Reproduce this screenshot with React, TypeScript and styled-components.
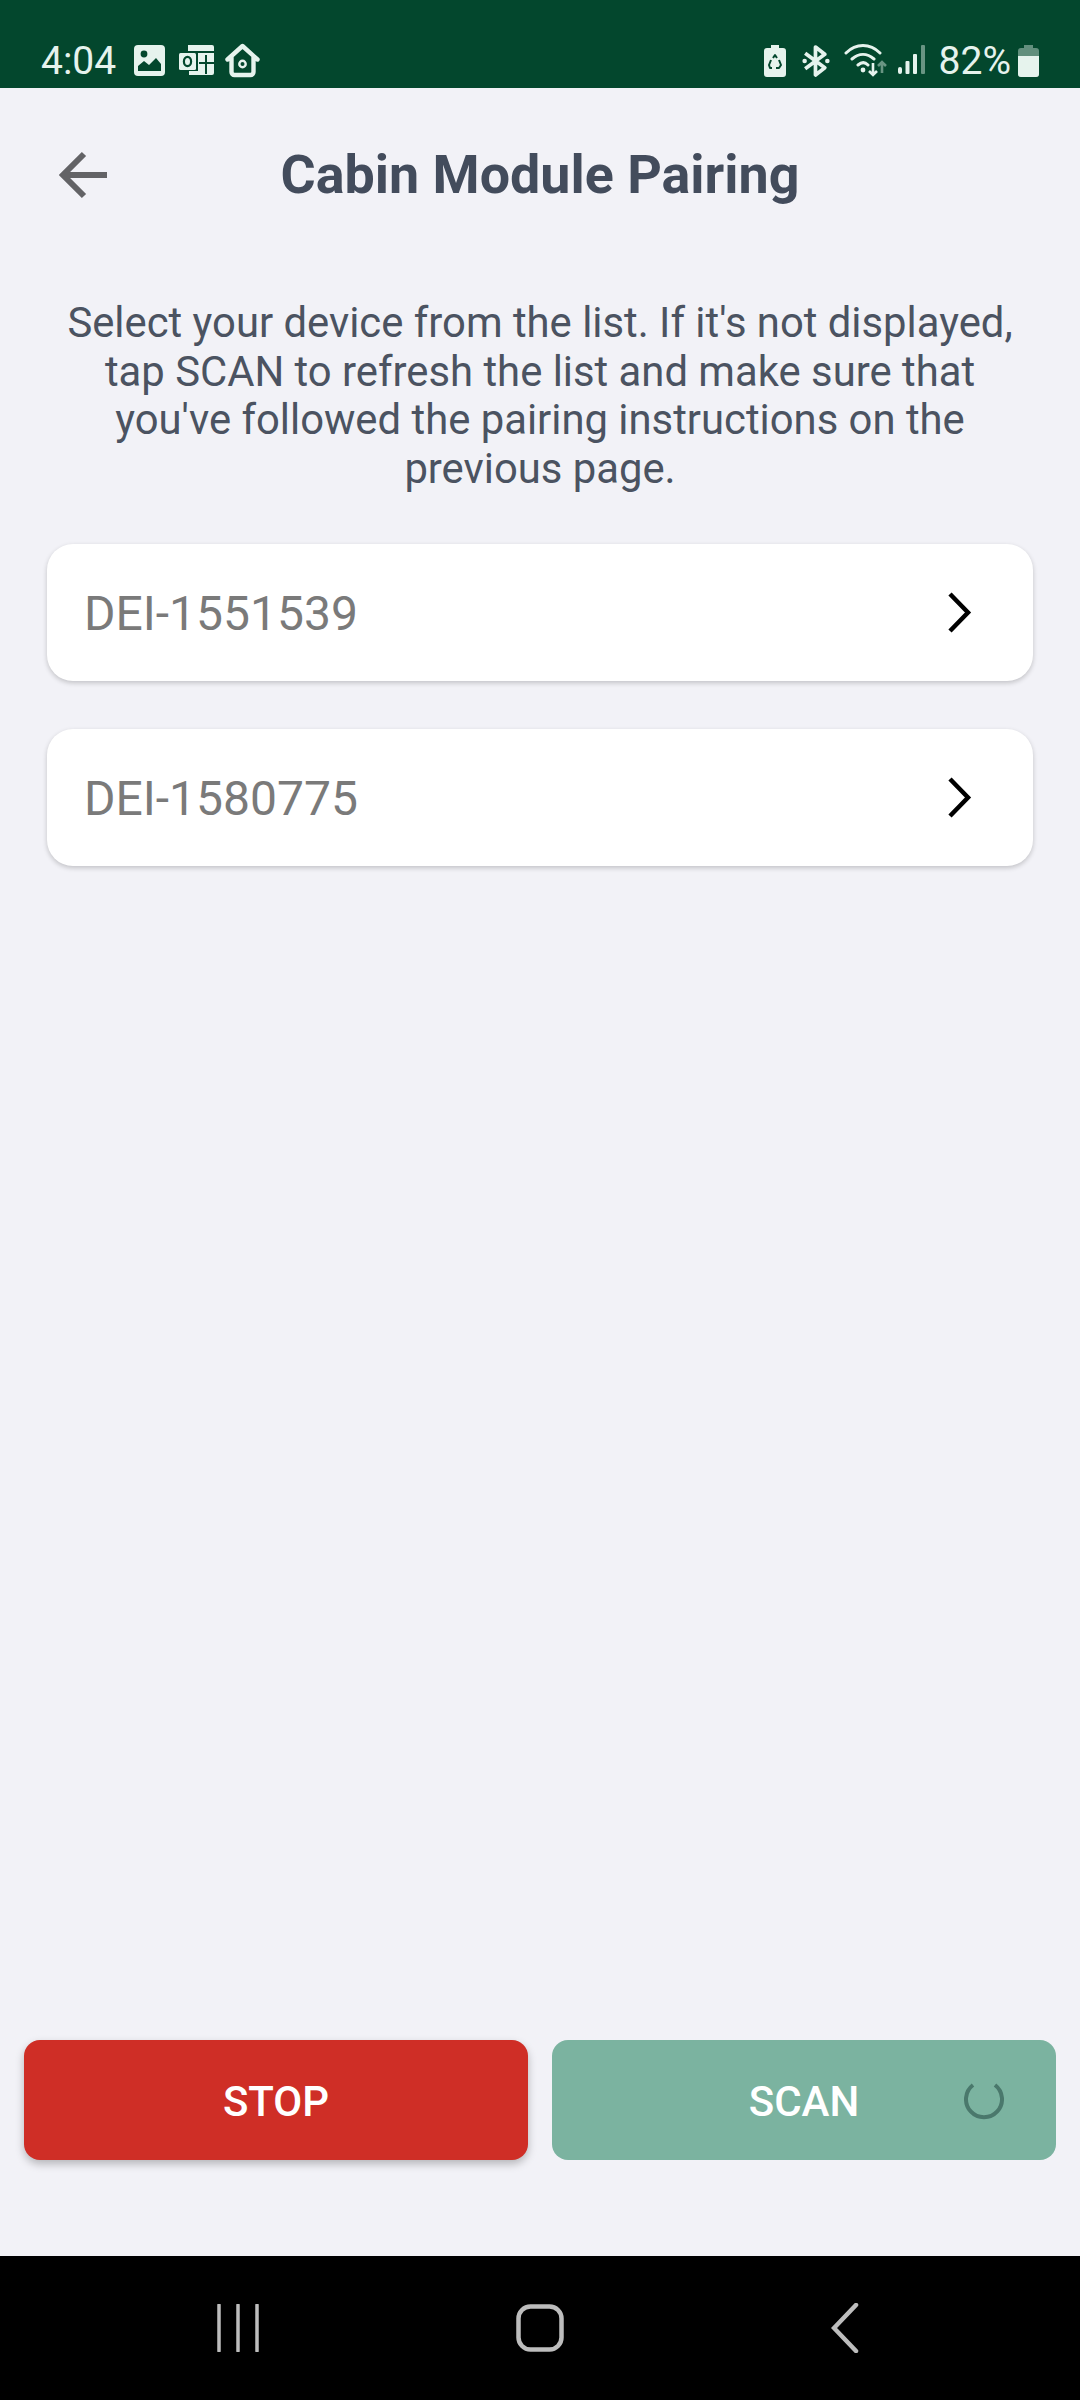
import React from 'react';
import styled, { createGlobalStyle } from 'styled-components';

const GlobalStyle = createGlobalStyle`
    html, body {
        margin: 0;
        padding: 0;
        background: #f2f2f7;
    }
    * {
        box-sizing: border-box;
    }
`;

const Page = styled.div`
    width: 1080px;
    height: 2400px;
    display: flex;
    flex-direction: column;
    background: #f2f2f7;
    font-family: Roboto, "Liberation Sans", sans-serif;
`;

const StatusBar = styled.div`
    height: 88px;
    flex: none;
    display: flex;
    align-items: flex-start;
    justify-content: space-between;
    padding: 38px 41px 0 41px;
    background: #03472d;
    color: #e6f3ed;
`;

const StatusGroup = styled.div`
    display: flex;
    align-items: flex-start;
`;

const StatusText = styled.span<{ $left?: number }>`
    font-size: 39px;
    line-height: 44px;
    margin-top: 1px;
    margin-left: ${(p) => p.$left ?? 0}px;
`;

const StatusIcon = styled.svg<{ $left: number; $top?: number }>`
    display: block;
    flex: none;
    margin-left: ${(p) => p.$left}px;
    margin-top: ${(p) => p.$top ?? 0}px;
`;

const Header = styled.header`
    display: grid;
    grid-template-columns: 1fr auto 1fr;
    align-items: center;
    height: 68px;
    margin-top: 53px;
    padding: 0 58px;
`;

const BackButton = styled.button`
    justify-self: start;
    display: flex;
    padding: 0;
    border: 0;
    background: none;
`;

const Title = styled.h1`
    margin: 0;
    font-size: 53.8px;
    line-height: 68px;
    font-weight: 700;
    color: #434c5c;
`;

const Intro = styled.p`
    margin: 90px 0 0;
    padding: 0 60px;
    text-align: center;
    font-size: 41.8px;
    line-height: 48.7px;
    color: #4b5361;
`;

const DeviceList = styled.div`
    display: flex;
    flex-direction: column;
    gap: 48px;
    margin-top: 50px;
    padding: 0 47px;
`;

const DeviceCard = styled.div`
    height: 137px;
    display: flex;
    align-items: center;
    justify-content: space-between;
    padding: 0 61px 0 37px;
    background: #fff;
    border-radius: 26px;
    box-shadow: 0 2px 5px rgba(0, 0, 0, 0.2);
`;

const DeviceName = styled.span`
    padding-top: 2px;
    font-size: 48px;
    color: #7a7a7a;
`;

const Spacer = styled.div`
    flex: 1;
`;

const Actions = styled.div`
    display: grid;
    grid-template-columns: 1fr 1fr;
    gap: 24px;
    padding: 0 24px;
    margin-bottom: 96px;
`;

const ActionButton = styled.button<{ $color: string; $raised?: boolean }>`
    position: relative;
    height: 120px;
    padding: 2px 0 0;
    border: 0;
    border-radius: 16px;
    background: ${(p) => p.$color};
    box-shadow: ${(p) => (p.$raised ? '0 4px 8px rgba(0, 0, 0, 0.25)' : 'none')};
    color: #fff;
    font-family: inherit;
    font-size: 42px;
    font-weight: 500;
`;

const Spinner = styled.svg`
    position: absolute;
    right: 52px;
    top: 40px;
`;

const NavBar = styled.div`
    height: 144px;
    flex: none;
    display: flex;
    align-items: center;
    justify-content: center;
    background: #000;
`;

const NavSlot = styled.div<{ $shift?: number }>`
    width: 302px;
    display: flex;
    justify-content: center;
    padding-left: ${(p) => p.$shift ?? 0}px;
`;

export default function App() {
    return (
        <Page>
            <GlobalStyle />
            <StatusBar>
                <StatusGroup>
                    <StatusText>4:04</StatusText>
                    {/* gallery */}
                    <StatusIcon $left={18} $top={7} width="31" height="31" viewBox="0 0 31 31">
                        <rect width="31" height="31" rx="4" fill="#e6f3ed" />
                        <circle cx="10" cy="9" r="3.4" fill="#03472d" />
                        <path d="M4 26v-5l6-5 5 4 7-7 5 6v7z" fill="#03472d" />
                    </StatusIcon>
                    {/* outlook */}
                    <StatusIcon $left={14} $top={7} width="35" height="30" viewBox="0 0 35 30">
                        <path d="M9 0h24a2 2 0 0 1 2 2v4H9z" fill="#e6f3ed" />
                        <path d="M19 8h16v20a2 2 0 0 1-2 2H10v-4h9z" fill="#e6f3ed" />
                        <rect y="8" width="17" height="17" rx="1.5" fill="#e6f3ed" />
                        <ellipse cx="8.5" cy="16.5" rx="3.6" ry="4.6" fill="none" stroke="#03472d" strokeWidth="2.2" />
                        <path d="M20 18h15M27 10v19" stroke="#03472d" strokeWidth="2" />
                    </StatusIcon>
                    {/* smartthings home */}
                    <StatusIcon $left={11} $top={5} width="35" height="35" viewBox="0 0 35 35">
                        <path
                            d="M2.5 16.5L17.5 3l15 13.5M6.5 14v15a3 3 0 0 0 3 3h16a3 3 0 0 0 3-3V14"
                            fill="none"
                            stroke="#e6f3ed"
                            strokeWidth="4.4"
                            strokeLinecap="round"
                            strokeLinejoin="round"
                        />
                        <circle cx="17.5" cy="21" r="3.2" fill="none" stroke="#e6f3ed" strokeWidth="2.4" />
                    </StatusIcon>
                </StatusGroup>
                <StatusGroup>
                    {/* battery saver */}
                    <StatusIcon $left={0} $top={7} width="22" height="32" viewBox="0 0 22 32">
                        <path d="M7 0h8v3h4a3 3 0 0 1 3 3v23a3 3 0 0 1-3 3H3a3 3 0 0 1-3-3V6a3 3 0 0 1 3-3h4z" fill="#e6f3ed" />
                        <path
                            d="M9 13l2-3 2 3M15 15l2 5-2 3h-3M8 23H6l-1-3 2-5"
                            fill="none"
                            stroke="#03472d"
                            strokeWidth="2"
                            strokeLinejoin="round"
                        />
                    </StatusIcon>
                    {/* bluetooth */}
                    <StatusIcon $left={16} $top={7} width="28" height="32" viewBox="0 0 27 31">
                        <path
                            d="M3 8l19 14-9 7V2l9 7L3 23"
                            fill="none"
                            stroke="#e6f3ed"
                            strokeWidth="3.6"
                            strokeLinejoin="round"
                        />
                        <circle cx="2.5" cy="15.5" r="2.2" fill="#e6f3ed" />
                        <circle cx="24.5" cy="15.5" r="2.2" fill="#e6f3ed" />
                    </StatusIcon>
                    {/* wifi */}
                    <StatusIcon $left={14} $top={5} width="44" height="34" viewBox="0 0 44 34">
                        <path
                            d="M2 10C12 0 26 0 36 10M8 16c7-6 15-6 22 0M14 22c3.500-3 7-3 10 0"
                            fill="none"
                            stroke="#e6f3ed"
                            strokeWidth="3"
                            strokeLinecap="round"
                        />
                        <circle cx="19" cy="27" r="2.4" fill="#e6f3ed" />
                        <path d="M29 20v12M25 28l4 4 4-4" fill="none" stroke="#e6f3ed" strokeWidth="2.6" />
                        <path d="M38 30V20M34 23l4-4 4 4" fill="none" stroke="#e6f3ed" strokeOpacity="0.45" strokeWidth="2.6" />
                    </StatusIcon>
                    {/* signal */}
                    <StatusIcon $left={10} $top={7} width="27" height="29" viewBox="0 0 27 29">
                        <rect x="0" y="22" width="4" height="7" rx="2" fill="#e6f3ed" />
                        <rect x="7.500" y="16" width="4" height="13" rx="1" fill="#e6f3ed" />
                        <rect x="15" y="9" width="4" height="20" rx="1" fill="#e6f3ed" />
                        <rect x="23" y="0" width="4" height="29" rx="1" fill="#e6f3ed" fillOpacity="0.45" />
                    </StatusIcon>
                    <StatusText $left={14}>82%</StatusText>
                    {/* battery */}
                    <StatusIcon $left={7} $top={7} width="21" height="32" viewBox="0 0 21 32">
                        <path d="M6 0h9v3h3a3 3 0 0 1 3 3v23a3 3 0 0 1-3 3H3a3 3 0 0 1-3-3V6a3 3 0 0 1 3-3h3z" fill="#e6f3ed" fillOpacity="0.42" />
                        <path d="M0 11h21v18a3 3 0 0 1-3 3H3a3 3 0 0 1-3-3z" fill="#e6f3ed" />
                    </StatusIcon>
                </StatusGroup>
            </StatusBar>

            <Header>
                <BackButton aria-label="Back">
                    <svg width="50" height="48" viewBox="0 0 50 48">
                        <path
                            d="M49 24H6M26 3L5 24l21 21"
                            fill="none"
                            stroke="#636366"
                            strokeWidth="6"
                        />
                    </svg>
                </BackButton>
                <Title>Cabin Module Pairing</Title>
            </Header>

            <Intro>
                Select your device from the list. If it's not displayed, tap SCAN to refresh the list and make sure that
                you've followed the pairing instructions on the previous page.
            </Intro>

            <DeviceList>
                {['DEI-1551539', 'DEI-1580775'].map((name) => (
                    <DeviceCard key={name}>
                        <DeviceName>{name}</DeviceName>
                        <svg width="25" height="41" viewBox="0 0 25 41">
                            <path d="M3 2l18 18.500L3 39" fill="none" stroke="#000" strokeWidth="4.5" />
                        </svg>
                    </DeviceCard>
                ))}
            </DeviceList>

            <Spacer />

            <Actions>
                <ActionButton $color="#cf2e26" $raised>
                    STOP
                </ActionButton>
                <ActionButton $color="#7bb3a0">
                    SCAN
                    <Spinner width="40" height="40" viewBox="0 0 40 40">
                        <path
                            d="M9 5a18 18 0 1 0 22 0"
                            fill="none"
                            stroke="#4a786c"
                            strokeWidth="4"
                        />
                    </Spinner>
                </ActionButton>
            </Actions>

            <NavBar>
                <NavSlot>
                    <svg width="42" height="48" viewBox="0 0 42 48">
                        <path d="M2 1v46M21 1v46M40 1v46" stroke="#bdbdbd" strokeWidth="3.500" strokeLinecap="round" />
                    </svg>
                </NavSlot>
                <NavSlot>
                    <svg width="48" height="48" viewBox="0 0 48 48">
                        <rect x="2.500" y="2.500" width="43" height="43" rx="12" fill="none" stroke="#bdbdbd" strokeWidth="4.500" />
                    </svg>
                </NavSlot>
                <NavSlot $shift={6}>
                    <svg width="28" height="50" viewBox="0 0 28 50">
                        <path d="M25 2L3 25l22 23" fill="none" stroke="#bdbdbd" strokeWidth="4.500" strokeLinecap="round" />
                    </svg>
                </NavSlot>
            </NavBar>
        </Page>
    );
}
